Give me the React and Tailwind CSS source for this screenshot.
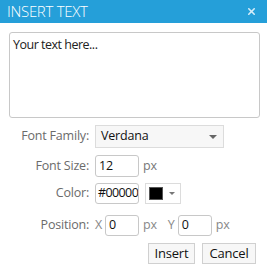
import { X } from 'lucide-react'

const font = { fontFamily: '"Open Sans", "Noto Sans", sans-serif' }

export default function App() {
    return (
        <div className="w-[267px] h-[278px] bg-white relative" style={font}>
            {/* Title bar */}
            <div className="h-[23px] bg-[#259fd9] flex items-center justify-between pl-[7px] pr-[10px]">
                <span className="text-white text-[15px] font-light leading-none tracking-[-0.3px]">INSERT TEXT</span>
                <X size={11} strokeWidth={3.5} className="text-[#d6edf9]" />
            </div>

            <div className="px-[9px] pt-[9px]">
                {/* Text area */}
                <div className="w-[251px] h-[86px] border border-[#c8c8c8] rounded-[3px] px-[3px] pt-[3px] text-[12.5px] leading-[17px] text-[#222] tracking-[-0.5px]">
                    Your text here...
                </div>

                {/* Form */}
                <div className="grid grid-cols-[80px_1fr] gap-x-[6px] mt-[7px] text-[12.5px] tracking-[-0.2px]">
                    <label className="text-right text-[#6b6b6b] self-center leading-none">Font Family:</label>
                    <div className="w-[129px] h-[23px] bg-[#f7f7f7] border border-[#dcdcdc] flex items-center justify-between pl-[5px] pr-[6px] text-[#111]">
                        <span>Verdana</span>
                        <span className="w-0 h-0 border-l-[4px] border-r-[4px] border-t-[4px] border-l-transparent border-r-transparent border-t-[#666]"></span>
                    </div>

                    <label className="text-right text-[#6b6b6b] self-center leading-none mt-[7px]">Font Size:</label>
                    <div className="flex items-center gap-[4px] mt-[7px]">
                        <div className="w-[44px] h-[22px] border border-[#c8c8c8] rounded-[3px] pl-[3px] flex items-center text-[#111]">12</div>
                        <span className="text-[#777]">px</span>
                    </div>

                    <label className="text-right text-[#6b6b6b] self-center leading-none mt-[6px]">Color:</label>
                    <div className="flex items-center gap-[6px] mt-[6px]">
                        <div className="w-[44px] h-[21px] border border-[#c8c8c8] rounded-[3px] pl-[2px] flex items-center text-[#111] overflow-hidden whitespace-nowrap tracking-[-0.6px]">#000000</div>
                        <div className="w-[36px] h-[21px] border border-[#dcdcdc] bg-white flex items-center pl-[3px] gap-[6px]">
                            <span className="w-[14px] h-[13px] bg-black border border-[#555]"></span>
                            <span className="w-0 h-0 border-l-[3px] border-r-[3px] border-t-[3px] border-l-transparent border-r-transparent border-t-[#777]"></span>
                        </div>
                    </div>

                    <label className="text-right text-[#6b6b6b] self-center leading-none mt-[11px]">Position:</label>
                    <div className="flex items-center mt-[11px] text-[#888]">
                        <span className="w-[10px]">X</span>
                        <div className="w-[34px] h-[21px] border border-[#c8c8c8] rounded-[3px] pl-[3px] flex items-center text-[#111]">0</div>
                        <span className="ml-[4px]">px</span>
                        <span className="ml-[11px] w-[10px]">Y</span>
                        <div className="w-[34px] h-[21px] border border-[#c8c8c8] rounded-[3px] pl-[3px] flex items-center text-[#111]">0</div>
                        <span className="ml-[4px]">px</span>
                    </div>
                </div>

                {/* Buttons */}
                <div className="flex justify-end gap-[7px] mt-[7px] pr-[2px] text-[13px] tracking-[-0.2px]">
                    <button className="w-[47px] h-[21px] bg-[#f7f7f7] border border-[#d0d0d0] text-[#111] leading-none">Insert</button>
                    <button className="w-[54px] h-[21px] bg-[#f7f7f7] border border-[#d0d0d0] text-[#111] leading-none">Cancel</button>
                </div>
            </div>
        </div>
    )
}
